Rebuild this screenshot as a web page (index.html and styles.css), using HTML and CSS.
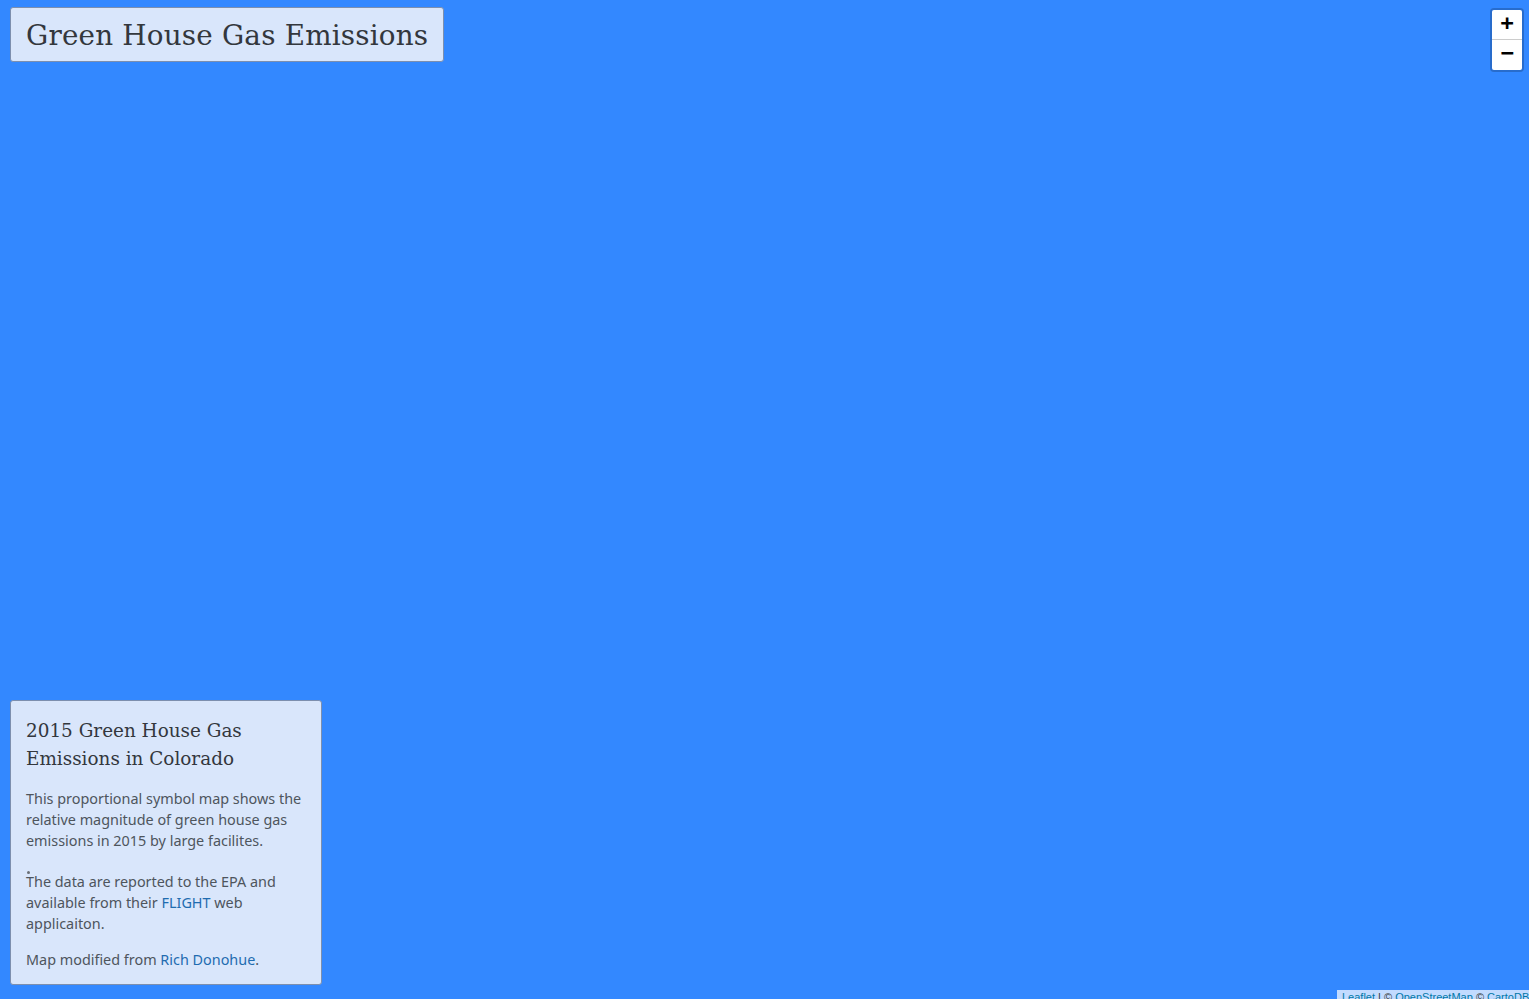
FILE: index.html
```html
<!DOCTYPE html>
<html lang="en">
<head>
<meta charset="utf-8">
<title>Green House Gas Emissions</title>
<link rel="stylesheet" href="styles.css">
</head>
<body>
<div class="map">
  <header class="title-box">
    <h1 class="title">Green House Gas Emissions</h1>
  </header>
  <div class="zoom">
    <a class="zoom-btn zoom-in" href="#">+</a>
    <a class="zoom-btn zoom-out" href="#">&#x2212;</a>
  </div>
  <aside class="legend">
    <h2 class="legend-title">2015 Green House Gas Emissions in Colorado</h2>
    <p class="legend-text flush">This proportional symbol map shows the relative magnitude of green house gas emissions in 2015 by large facilites.</p>
    <div class="dot"></div>
    <p class="legend-text">The data are reported to the EPA and available from their <a href="#">FLIGHT</a> web applicaiton.</p>
    <p class="legend-text">Map modified from <a href="#">Rich Donohue</a>.</p>
  </aside>
  <div class="attribution"><a href="#">Leaflet</a> | © <a href="#">OpenStreetMap</a> © <a href="#">CartoDB</a></div>
</div>
</body>
</html>
```
FILE: styles.css
```css
html, body {
  margin: 0;
  padding: 0;
  height: 100%;
  overflow: hidden;
}
.map {
  position: relative;
  width: 1529px;
  height: 999px;
  background: #3388ff;
  font-family: "Noto Sans", "Open Sans", sans-serif;
}
.title-box {
  position: absolute;
  left: 10px;
  top: 7px;
  width: 432px;
  height: 53px;
  background: #d9e6fb;
  border: 1px solid #7d8fae;
  border-radius: 3px;
  display: flex;
  align-items: center;
}
.title {
  margin: 2px 0 0 15px;
  font-family: "DejaVu Serif", serif;
  font-weight: normal;
  font-size: 27.8px;
  color: #33373d;
  letter-spacing: 0.2px;
}
.zoom {
  position: absolute;
  right: 5px;
  top: 8px;
  border: 2px solid rgba(0,0,0,0.2);
  border-radius: 4px;
  display: flex;
  flex-direction: column;
}
.zoom-btn {
  width: 30px;
  height: 30px;
  line-height: 30px;
  text-align: center;
  background: #fff;
  color: #000;
  text-decoration: none;
  font: bold 22px "DejaVu Sans Mono", monospace;
}
.zoom-in {
  height: 29px;
  border-bottom: 1px solid #ccc;
  border-radius: 2px 2px 0 0;
}
.zoom-out {
  border-radius: 0 0 2px 2px;
}
.legend {
  position: absolute;
  left: 10px;
  top: 700px;
  width: 280px;
  padding: 16px 15px 14px 15px;
  background: #d9e6fb;
  border: 1px solid #7d8fae;
  border-radius: 3px;
}
.legend-title {
  margin: 0 0 15px 0;
  font-family: "DejaVu Serif", serif;
  font-weight: normal;
  font-size: 18.4px;
  line-height: 28px;
  color: #33373d;
}
.legend-text {
  margin: 0 0 15px 0;
  font-size: 14.4px;
  line-height: 21px;
  color: #4e555d;
}
.legend-text.flush {
  margin-bottom: 0;
}
.legend-text:last-child {
  margin-bottom: 0;
}
.dot {
  width: 3px;
  height: 3px;
  border-radius: 50%;
  background: #6a6f76;
  margin: 20px 0 -3px 1px;
}
.legend a {
  color: #1f6cb0;
  text-decoration: none;
}
.attribution {
  position: absolute;
  right: 0;
  bottom: -6px;
  left: 1337px;
  height: 15px;
  padding: 0 0 0 5px;
  white-space: nowrap;
  overflow: hidden;
  background: rgba(255,255,255,0.7);
  font: 11px/15px "Liberation Sans", Arial, sans-serif;
  color: #333;
}
.attribution a {
  color: #0078a8;
  text-decoration: none;
}
```
